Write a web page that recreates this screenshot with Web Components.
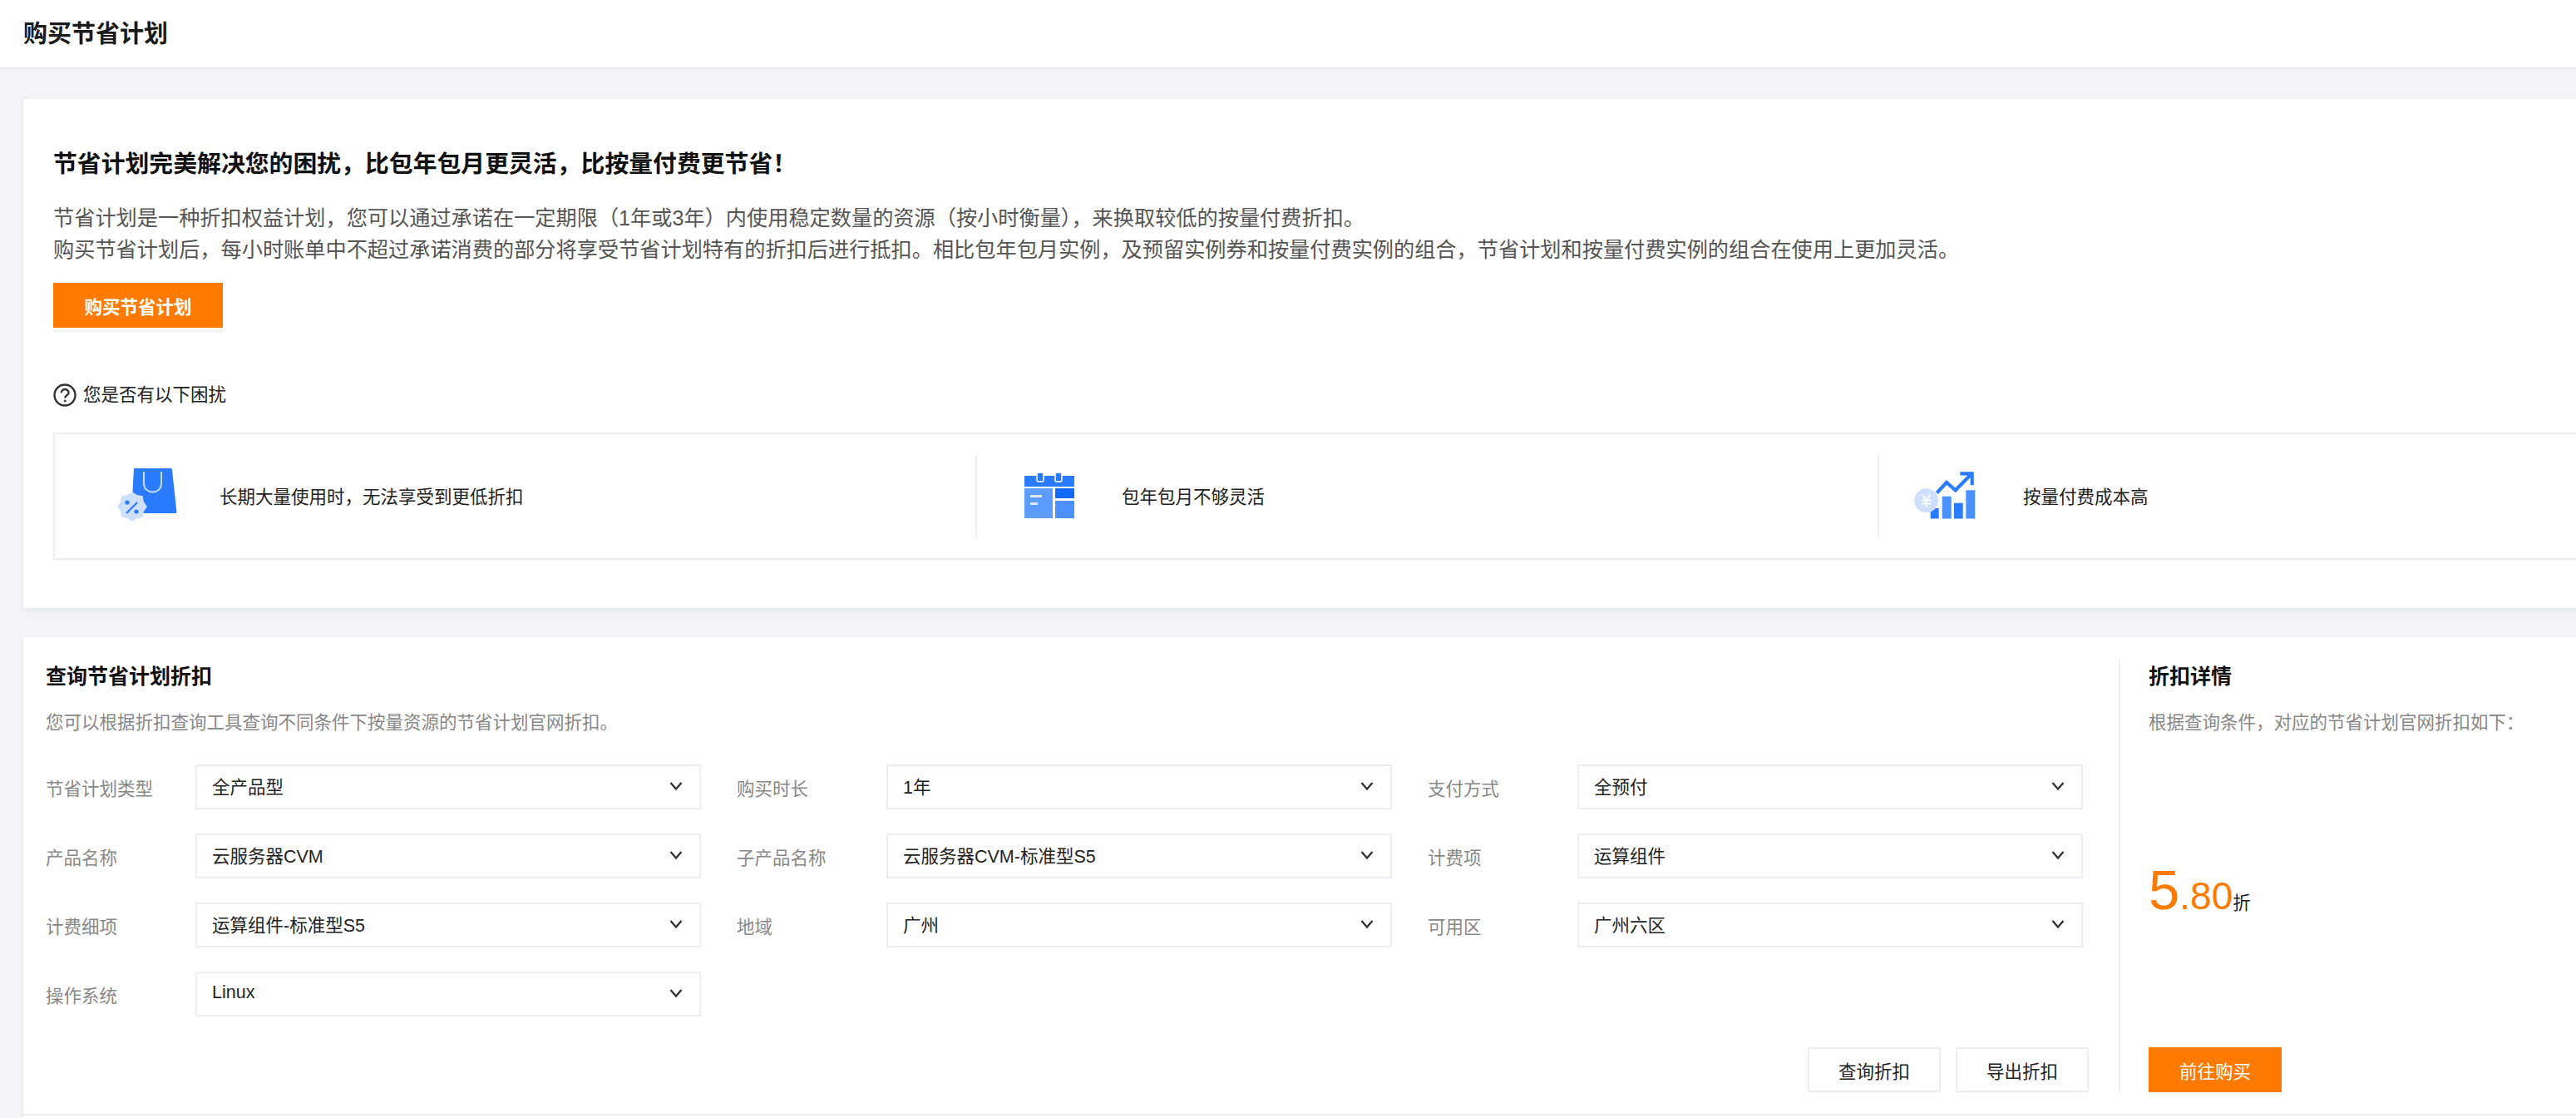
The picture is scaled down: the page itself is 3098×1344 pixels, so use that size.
<!DOCTYPE html>
<html lang="zh">
<head>
<meta charset="utf-8">
<title>购买节省计划</title>
<style>
  html, body { margin: 0; height: 100%; overflow: hidden; background: #f2f4f8; }
  body { font: 21.5px "Liberation Sans", "Noto Sans CJK SC", sans-serif; color: #222; }
</style>
</head>
<body>
<plan-page>
  <page-header>购买节省计划</page-header>

  <intro-card>
    <span slot="heading">节省计划完美解决您的困扰，比包年包月更灵活，比按量付费更节省！</span>
    <span slot="line1">节省计划是一种折扣权益计划，您可以通过承诺在一定期限（1年或3年）内使用稳定数量的资源（按小时衡量），来换取较低的按量付费折扣。</span>
    <span slot="line2">购买节省计划后，每小时账单中不超过承诺消费的部分将享受节省计划特有的折扣后进行抵扣。相比包年包月实例，及预留实例券和按量付费实例的组合，节省计划和按量付费实例的组合在使用上更加灵活。</span>
    <plan-button slot="action" kind="primary" wide>购买节省计划</plan-button>
    <span slot="question">您是否有以下困扰</span>
    <problem-item slot="items" icon="bag" style="width:1109px;--pad:75px;--gap:51px">长期大量使用时，无法享受到更低折扣</problem-item>
    <problem-item slot="items" icon="calendar" style="width:1085px;--pad:57px;--gap:57px">包年包月不够灵活</problem-item>
    <problem-item slot="items" icon="chart" style="width:900px;--pad:42px;--gap:57px">按量付费成本高</problem-item>
  </intro-card>

  <query-card>
    <span slot="title">查询节省计划折扣</span>
    <span slot="desc">您可以根据折扣查询工具查询不同条件下按量资源的节省计划官网折扣。</span>
    <select-field slot="fields" label="节省计划类型">全产品型</select-field>
    <select-field slot="fields" label="购买时长">1年</select-field>
    <select-field slot="fields" label="支付方式">全预付</select-field>
    <select-field slot="fields" label="产品名称">云服务器CVM</select-field>
    <select-field slot="fields" label="子产品名称">云服务器CVM-标准型S5</select-field>
    <select-field slot="fields" label="计费项">运算组件</select-field>
    <select-field slot="fields" label="计费细项">运算组件-标准型S5</select-field>
    <select-field slot="fields" label="地域">广州</select-field>
    <select-field slot="fields" label="可用区">广州六区</select-field>
    <select-field slot="fields" label="操作系统">Linux</select-field>
    <plan-button slot="actions">查询折扣</plan-button>
    <plan-button slot="actions">导出折扣</plan-button>
    <discount-panel slot="aside" whole="5" fraction=".80" unit="折">
      <span slot="title">折扣详情</span>
      <span slot="desc">根据查询条件，对应的节省计划官网折扣如下：</span>
      <plan-button slot="action" kind="primary">前往购买</plan-button>
    </discount-panel>
  </query-card>
</plan-page>

<script>
const icons = {
  bag: `<svg width="72" height="66" viewBox="0 0 72 66">
    <path d="M20 0h44.500l1.500 1.500 5.500 51.500-1 1H17z" fill="#2b7bff"/>
    <path d="M32 4v14c0 14 21 14 21 0V4" fill="none" stroke="#c9dcff" stroke-width="2"/>
    <path d="M36 46l-4.100 5.700-1.200 7-7 1.200L18 64l-5.700-4.100-7-1.200-1.200-7L0 46l4.100-5.700 1.200-7 7-1.200L18 28l5.700 4.100 7 1.200 1.200 7z" fill="#cfe0ff"/>
    <path d="M11 54l13-13" stroke="#2b7bff" stroke-width="2.200"/>
    <circle cx="12" cy="41" r="2.600" fill="#2b7bff"/><circle cx="23" cy="52" r="2.600" fill="#2b7bff"/>
  </svg>`,
  calendar: `<svg width="60" height="56" viewBox="0 0 60 56">
    <rect x="0" y="4" width="60" height="13" fill="#2b7bff"/>
    <rect x="15" y="0" width="8" height="11" rx="2" fill="#2b7bff" stroke="#fff" stroke-width="1.500"/>
    <rect x="37" y="0" width="8" height="11" rx="2" fill="#2b7bff" stroke="#fff" stroke-width="1.500"/>
    <rect x="0" y="19" width="34" height="36" fill="#5c9cff"/>
    <rect x="37" y="19" width="23" height="12" fill="#0f6bff"/>
    <rect x="37" y="34" width="23" height="21" fill="#4a90ff"/>
    <rect x="7" y="27" width="14" height="3" fill="#dbe8ff"/>
    <rect x="7" y="36" width="9" height="3" fill="#dbe8ff"/>
  </svg>`,
  chart: `<svg width="74" height="57" viewBox="0 0 74 57">
    <rect x="19.700" y="44" width="10" height="12.500" fill="#2b7bff"/>
    <rect x="33.700" y="29.700" width="11" height="26.800" fill="#4a90ff"/>
    <rect x="48" y="37.700" width="10.700" height="18.800" fill="#2b7bff"/>
    <rect x="62.300" y="22.300" width="11" height="34.200" fill="#4a90ff"/>
    <path d="M27.300 25.700L39 13l10.700 9.300L68 3.700" fill="none" stroke="#2b7bff" stroke-width="4.200"/>
    <path d="M55.300 2.300h14.400v14" fill="none" stroke="#2b7bff" stroke-width="4.200"/>
    <circle cx="14.700" cy="34.700" r="14.500" fill="#cfe0ff"/>
    <path d="M10.200 28l4.500 6 4.500-6M9.200 34.500h11M9.200 38.500h11M14.700 34v9" fill="none" stroke="#fff" stroke-width="2"/>
  </svg>`
};

class PlanPage extends HTMLElement {
  constructor () {
    super();
    this.attachShadow({ mode: 'open' }).innerHTML = `
    <style>
      :host { display: block; width: 3300px; }
    </style>
    <slot></slot>`;
  }
}

class PageHeader extends HTMLElement {
  constructor () {
    super();
    this.attachShadow({ mode: 'open' }).innerHTML = `
    <style>
      :host {
        display: flex; align-items: center; box-sizing: border-box;
        height: 83px; padding: 0 0 6px 28px; background: #fff;
        border-bottom: 2px solid #e8ebf2;
        font-size: 29px; font-weight: 700; color: #1b1b1b;
      }
    </style>
    <slot></slot>`;
  }
}

class IntroCard extends HTMLElement {
  constructor () {
    super();
    this.attachShadow({ mode: 'open' }).innerHTML = `
    <style>
      :host {
        display: block; box-sizing: border-box; width: 3200px; margin: 36px 0 0 28px;
        padding: 58px 0 58px 36px; background: #fff;
        box-shadow: 0 2px 6px rgba(54, 58, 80, .08);
      }
      h2 { margin: 0; font-size: 28.85px; line-height: 40px; font-weight: 700; color: #111; }
      p { margin: 26px 0 0; font-size: 25.2px; line-height: 38px; color: #555; white-space: nowrap; }
      p span { display: block; }
      .action { margin-top: 21px; }
      .question { display: flex; align-items: center; gap: 8px; margin-top: 61px; line-height: 40px; color: #222; }
      .items { display: flex; width: 3164px; height: 153px; margin-top: 25px; box-sizing: border-box; border: 2px solid #eceef3; }
    </style>
    <h2><slot name="heading"></slot></h2>
    <p><span><slot name="line1"></slot></span><span><slot name="line2"></slot></span></p>
    <div class="action"><slot name="action"></slot></div>
    <div class="question">
      <svg width="28" height="28" viewBox="0 0 28 28" fill="none" stroke="#333" stroke-width="2.400">
        <circle cx="14" cy="14" r="12.500"/>
        <path d="M9.800 11.200c0-5.600 8.800-5.600 8.800 0 0 3.200-4.400 3-4.400 6.200"/>
        <circle cx="14.200" cy="21" r="1" fill="#333" stroke-width="1"/>
      </svg>
      <slot name="question"></slot>
    </div>
    <div class="items"><slot name="items"></slot></div>`;
  }
}

class ProblemItem extends HTMLElement {
  constructor () {
    super();
    const icon = icons[this.getAttribute('icon')];
    this.attachShadow({ mode: 'open' }).innerHTML = `
    <style>
      :host { display: flex; align-items: center; box-sizing: border-box; height: 100%; flex: none; position: relative; }
      :host(:not(:last-child))::after {
        content: ""; position: absolute; right: 0; top: 25px; bottom: 24px; width: 2px; background: #eceef3;
      }
      .wrap { display: flex; align-items: center; padding-left: var(--pad); gap: var(--gap); color: #222; }
      svg { display: block; margin-bottom: 2px; }
      span { margin-bottom: 2px; }
    </style>
    <div class="wrap">${icon}<span><slot></slot></span></div>`;
  }
}

class PlanButton extends HTMLElement {
  constructor () {
    super();
    this.attachShadow({ mode: 'open' }).innerHTML = `
    <style>
      :host {
        display: inline-flex; align-items: center; justify-content: center; box-sizing: border-box;
        width: 160px; height: 54px; background: #fff; border: 2px solid #eceef3; color: #222; font-size: 21.5px;
      }
      :host([wide]) { width: 204px; font-weight: 700; }
      :host([kind="primary"]) { background: #ff7a00; border-color: #ff7a00; color: #fff; }
    </style>
    <slot></slot>`;
  }
}

class SelectField extends HTMLElement {
  constructor () {
    super();
    this.attachShadow({ mode: 'open' }).innerHTML = `
    <style>
      :host { display: flex; align-items: center; height: 54px; }
      label { flex: none; width: 180px; color: #888; }
      .box {
        display: flex; align-items: center; justify-content: space-between; box-sizing: border-box;
        width: 608px; height: 54px; padding: 0 20px 3px 18px; border: 2px solid #eceef3; background: #fff; color: #222;
      }
      svg { display: block; }
    </style>
    <label>${this.getAttribute('label')}</label>
    <div class="box">
      <span><slot></slot></span>
      <svg width="16" height="12" viewBox="0 0 16 12" fill="none" stroke="#333" stroke-width="2.400"><path d="M1.500 2l6.500 7.500L14.500 2"/></svg>
    </div>`;
  }
}

class QueryCard extends HTMLElement {
  constructor () {
    super();
    this.attachShadow({ mode: 'open' }).innerHTML = `
    <style>
      :host {
        display: block; width: 3200px; margin: 35px 0 0 28px; padding-bottom: 40px;
        background: #fff; box-shadow: 0 2px 6px rgba(54, 58, 80, .08);
      }
      .row { display: flex; box-sizing: border-box; height: 575px; border-bottom: 2px solid #eceef3; }
      .main { flex: none; box-sizing: border-box; width: 2520px; padding: 29px 36px 0 27px; }
      h3 { margin: 0; font-size: 25px; line-height: 36px; font-weight: 700; color: #111; }
      p { margin: 20px 0 0; line-height: 36px; color: #888; }
      .fields { display: grid; grid-template-columns: repeat(3, 788px); column-gap: 43px; row-gap: 29px; margin-top: 32px; }
      .actions { display: flex; justify-content: flex-end; gap: 18px; margin-top: 37px; }
    </style>
    <div class="row">
      <div class="main">
        <h3><slot name="title"></slot></h3>
        <p><slot name="desc"></slot></p>
        <div class="fields"><slot name="fields"></slot></div>
        <div class="actions"><slot name="actions"></slot></div>
      </div>
      <slot name="aside"></slot>
    </div>`;
  }
}

class DiscountPanel extends HTMLElement {
  constructor () {
    super();
    this.attachShadow({ mode: 'open' }).innerHTML = `
    <style>
      :host {
        display: flex; flex-direction: column; box-sizing: border-box; width: 640px; height: 520px; margin-top: 27px;
        padding: 2px 0 0 34px; border-left: 2px solid #eceef3;
      }
      h3 { margin: 0; font-size: 25px; line-height: 36px; font-weight: 700; color: #111; }
      p { margin: 20px 0 0; line-height: 36px; color: #888; }
      .value { margin-top: 143px; line-height: 80px; color: #ff7a00; white-space: nowrap; }
      .whole { font-size: 67px; }
      .fraction { font-size: 46px; }
      .unit { font-size: 21.5px; color: #222; }
      .action { margin-top: auto; }
    </style>
    <h3><slot name="title"></slot></h3>
    <p><slot name="desc"></slot></p>
    <div class="value"><span class="whole">${this.getAttribute('whole')}</span><span class="fraction">${this.getAttribute('fraction')}</span><span class="unit">${this.getAttribute('unit')}</span></div>
    <div class="action"><slot name="action"></slot></div>`;
  }
}

customElements.define('plan-page', PlanPage);
customElements.define('page-header', PageHeader);
customElements.define('intro-card', IntroCard);
customElements.define('problem-item', ProblemItem);
customElements.define('plan-button', PlanButton);
customElements.define('select-field', SelectField);
customElements.define('query-card', QueryCard);
customElements.define('discount-panel', DiscountPanel);
</script>
</body>
</html>
